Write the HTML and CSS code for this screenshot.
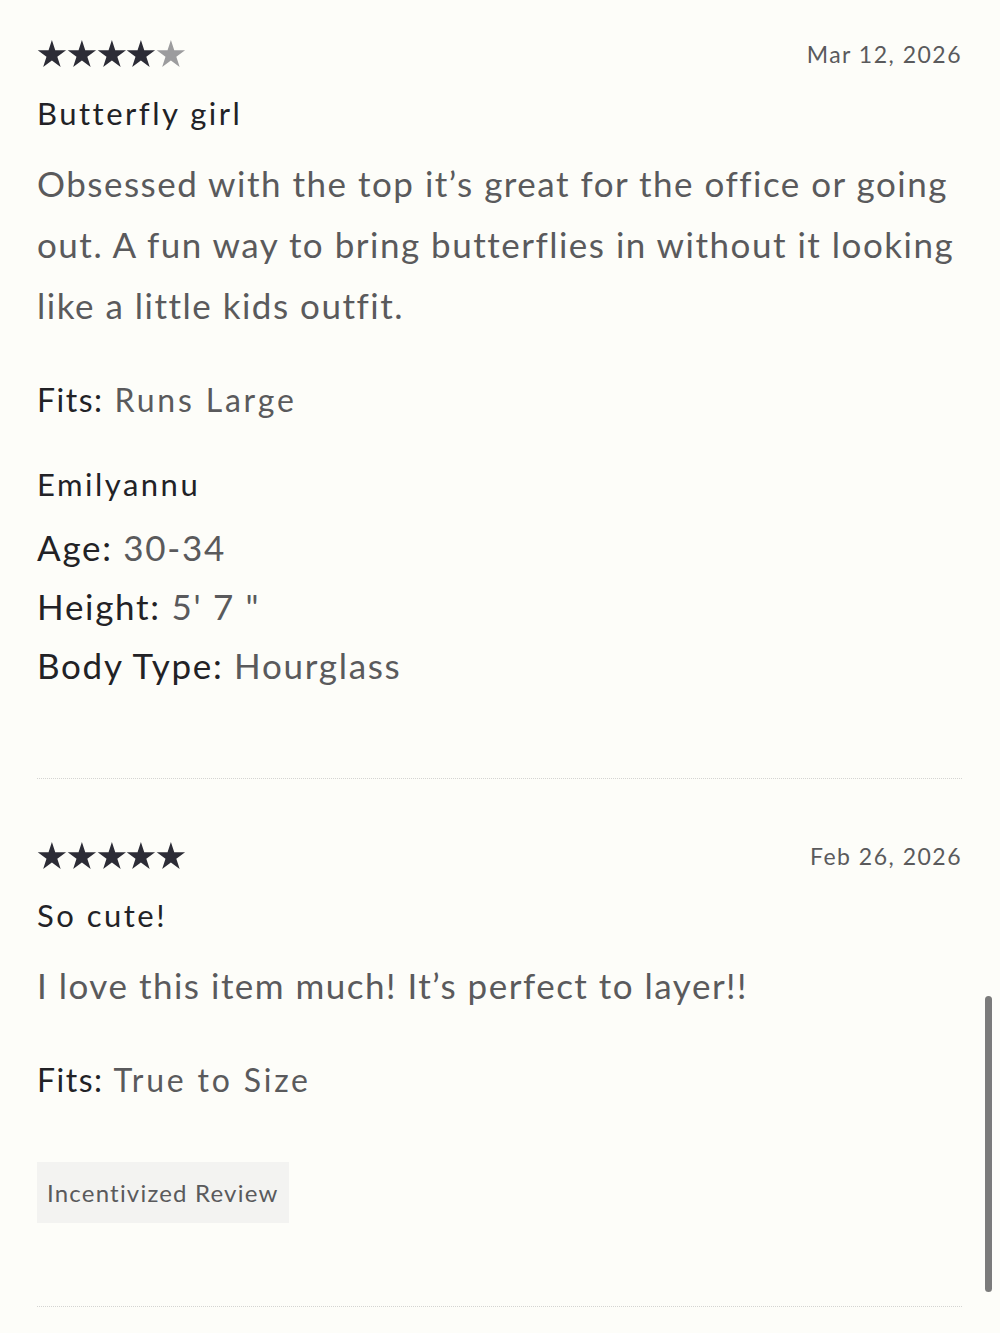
FILE: index.html
```html
<!DOCTYPE html>
<html lang="en">

<head>
    <meta charset="UTF-8">
    <meta name="viewport" content="width=device-width, initial-scale=1.0">
    <title>Reviews</title>
    <link rel="stylesheet" href="styles.css">
</head>

<body>
    <div class="reviews">

        <div class="review">
            <div class="review-head">
                <div class="stars" title="4 out of 5">
                    <svg class="star" viewBox="0 0 30 28"><polygon points="15,0 18.37,10.36 29.27,10.36 20.45,16.77 23.82,27.14 15,20.73 6.18,27.14 9.55,16.77 0.73,10.36 11.63,10.36"/></svg>
                    <svg class="star" viewBox="0 0 30 28"><polygon points="15,0 18.37,10.36 29.27,10.36 20.45,16.77 23.82,27.14 15,20.73 6.18,27.14 9.55,16.77 0.73,10.36 11.63,10.36"/></svg>
                    <svg class="star" viewBox="0 0 30 28"><polygon points="15,0 18.37,10.36 29.27,10.36 20.45,16.77 23.82,27.14 15,20.73 6.18,27.14 9.55,16.77 0.73,10.36 11.63,10.36"/></svg>
                    <svg class="star" viewBox="0 0 30 28"><polygon points="15,0 18.37,10.36 29.27,10.36 20.45,16.77 23.82,27.14 15,20.73 6.18,27.14 9.55,16.77 0.73,10.36 11.63,10.36"/></svg>
                    <svg class="star star-empty" viewBox="0 0 30 28"><polygon points="15,0 18.37,10.36 29.27,10.36 20.45,16.77 23.82,27.14 15,20.73 6.18,27.14 9.55,16.77 0.73,10.36 11.63,10.36"/></svg>
                </div>
                <span class="review-date">Mar 12, 2026</span>
            </div>
            <h3 class="review-title">Butterfly girl</h3>
            <p class="review-body">Obsessed with the top it’s great for the office or going out. A fun way to bring butterflies in without it looking like a little kids outfit.</p>
            <div class="review-fit"><b>Fits:</b> Runs Large</div>
            <div class="reviewer">
                <div class="reviewer-name">Emilyannu</div>
                <div class="reviewer-attr"><b>Age:</b> 30-34</div>
                <div class="reviewer-attr"><b>Height:</b> 5' 7 "</div>
                <div class="reviewer-attr"><b>Body Type:</b> Hourglass</div>
            </div>
        </div>

        <div class="review">
            <div class="review-head">
                <div class="stars" title="5 out of 5">
                    <svg class="star" viewBox="0 0 30 28"><polygon points="15,0 18.37,10.36 29.27,10.36 20.45,16.77 23.82,27.14 15,20.73 6.18,27.14 9.55,16.77 0.73,10.36 11.63,10.36"/></svg>
                    <svg class="star" viewBox="0 0 30 28"><polygon points="15,0 18.37,10.36 29.27,10.36 20.45,16.77 23.82,27.14 15,20.73 6.18,27.14 9.55,16.77 0.73,10.36 11.63,10.36"/></svg>
                    <svg class="star" viewBox="0 0 30 28"><polygon points="15,0 18.37,10.36 29.27,10.36 20.45,16.77 23.82,27.14 15,20.73 6.18,27.14 9.55,16.77 0.73,10.36 11.63,10.36"/></svg>
                    <svg class="star" viewBox="0 0 30 28"><polygon points="15,0 18.37,10.36 29.27,10.36 20.45,16.77 23.82,27.14 15,20.73 6.18,27.14 9.55,16.77 0.73,10.36 11.63,10.36"/></svg>
                    <svg class="star" viewBox="0 0 30 28"><polygon points="15,0 18.37,10.36 29.27,10.36 20.45,16.77 23.82,27.14 15,20.73 6.18,27.14 9.55,16.77 0.73,10.36 11.63,10.36"/></svg>
                </div>
                <span class="review-date">Feb 26, 2026</span>
            </div>
            <h3 class="review-title">So cute!</h3>
            <p class="review-body">I love this item much! It’s perfect to layer!!</p>
            <div class="review-fit"><b>Fits:</b> True to Size</div>
            <span class="badge">Incentivized Review</span>
        </div>

    </div>

    <div class="scroll-thumb"></div>
</body>

</html>
```

FILE: styles.css
```css
:root {
    --bg-color: #fdfdf9;
    --text-dark: #222226;
    --text-muted: #5a5a5c;
    --star-color: #2c2c36;
    --star-empty: #9c9c9e;
    --rule-color: #d4d4d2;
}

* {
    box-sizing: border-box;
    margin: 0;
    padding: 0;
}

body {
    font-family: 'Lato', 'Open Sans', sans-serif;
    background-color: var(--bg-color);
    color: var(--text-dark);
}

.reviews {
    padding: 0 38px 0 37px;
}

.review {
    padding: 63px 0 83px;
    border-bottom: 1px dotted var(--rule-color);
}

.review:first-child {
    padding-top: 40px;
}

.review-head {
    display: flex;
    justify-content: space-between;
    align-items: center;
    height: 28px;
}

.stars {
    display: flex;
}

.star {
    width: 29.8px;
    height: 27.8px;
    fill: var(--star-color);
}

.star-empty {
    fill: var(--star-empty);
}

.review-date {
    font-size: 23px;
    letter-spacing: 1.5px;
    color: var(--text-muted);
}

.review-title {
    margin-top: 25px;
    font-size: 31px;
    font-weight: 400;
    line-height: 40px;
    letter-spacing: 2.5px;
}

.review-body {
    margin-top: 20px;
    font-size: 35px;
    line-height: 61px;
    letter-spacing: 1.5px;
    color: var(--text-muted);
}

.review-fit {
    margin-top: 44px;
    font-size: 32px;
    line-height: 40px;
    letter-spacing: 2.8px;
    color: var(--text-muted);
}

.review-fit b,
.reviewer-attr b {
    font-weight: 400;
    color: var(--text-dark);
}

.review-fit b {
    letter-spacing: 1.5px;
}

.reviewer-name {
    margin-top: 44px;
    font-size: 31px;
    line-height: 40px;
    letter-spacing: 2.5px;
}

.reviewer-attr {
    font-size: 35px;
    line-height: 59px;
    letter-spacing: 1.7px;
    color: var(--text-muted);
}

.reviewer-name + .reviewer-attr {
    margin-top: 14px;
}

.badge {
    display: inline-block;
    margin-top: 62px;
    padding: 0 11px 0 10px;
    height: 61px;
    line-height: 61px;
    font-size: 24px;
    letter-spacing: 1.2px;
    color: var(--text-muted);
    background-color: #f3f3f1;
}

/* overlay scrollbar thumb */
.scroll-thumb {
    position: fixed;
    top: 996px;
    right: 8px;
    width: 7px;
    height: 296px;
    border-radius: 4px;
    background-color: #7b7b7b;
}
```
